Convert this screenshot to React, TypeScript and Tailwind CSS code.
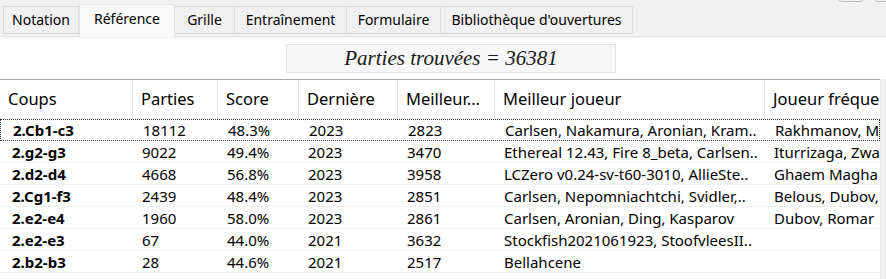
const tabs = [
  { label: "Notation", w: 76 },
  { label: "Référence", w: 96, active: true },
  { label: "Grille", w: 61 },
  { label: "Entraînement", w: 113 },
  { label: "Formulaire", w: 95 },
  { label: "Bibliothèque d'ouvertures", w: 193 },
];

const cols = [
  { label: "Coups", w: 133 },
  { label: "Parties", w: 85 },
  { label: "Score", w: 81 },
  { label: "Dernière", w: 99 },
  { label: "Meilleur...", w: 97 },
  { label: "Meilleur joueur", w: 270 },
  { label: "Joueur fréque", w: 115 },
];

const rows = [
  ["2.Cb1-c3", "18112", "48.3%", "2023", "2823", "Carlsen, Nakamura, Aronian, Kram..", "Rakhmanov, M"],
  ["2.g2-g3", "9022", "49.4%", "2023", "3470", "Ethereal 12.43, Fire 8_beta, Carlsen..", "Iturrizaga, Zwa"],
  ["2.d2-d4", "4668", "56.8%", "2023", "3958", "LCZero v0.24-sv-t60-3010, AllieSte..", "Ghaem Magha"],
  ["2.Cg1-f3", "2439", "48.4%", "2023", "2851", "Carlsen, Nepomniachtchi, Svidler,..", "Belous, Dubov,"],
  ["2.e2-e4", "1960", "58.0%", "2023", "2861", "Carlsen, Aronian, Ding, Kasparov", "Dubov, Romar"],
  ["2.e2-e3", "67", "44.0%", "2021", "3632", "Stockfish2021061923, StoofvleesII..", ""],
  ["2.b2-b3", "28", "44.6%", "2021", "2517", "Bellahcene", ""],
];

export default function App() {
  return (
    <div className="w-[886px] h-[279px] bg-white overflow-hidden relative font-['Noto_Sans',sans-serif] text-black">
      {/* buttons peeking at top right */}
      <div className="absolute right-[22px] -top-[6px] w-[26px] h-[8px] rounded border border-[#bdbdbd] bg-[#f3f3f3]" />
      <div className="absolute -right-[14px] -top-[6px] w-[26px] h-[8px] rounded border border-[#bdbdbd] bg-[#f3f3f3]" />

      {/* tab strip */}
      <div className="h-[37px] bg-[#f0f0f0] border-b border-[#e3e3e3] flex items-end pl-[3px]">
        {tabs.map((t) =>
          t.active ? (
            <div
              key={t.label}
              style={{ width: t.w }}
              className="h-[33px] -mb-px bg-[#f9f9f9] border border-b-0 border-[#e3e3e3] flex items-start justify-center pt-[4px] text-[14px] leading-[20px] relative z-10"
            >
              {t.label}
            </div>
          ) : (
            <div
              key={t.label}
              style={{ width: t.w }}
              className="h-[28px] mb-[2px] bg-[#f0f0f0] border border-[#dadada] -ml-px first:ml-0 flex items-center justify-center text-[14px] leading-[20px]"
            >
              {t.label}
            </div>
          )
        )}
      </div>
      <div className="h-[2px] bg-[#f7f7f7]" />

      {/* games found */}
      <div className="mt-[5px] ml-[286px] w-[330px] h-[29px] bg-[#f7f7f7] border border-[#e3e3e3] flex items-center justify-center font-['Liberation_Serif',serif] italic text-[21px] leading-none text-[#1a1a1a]">
        Parties trouvées = 36381
      </div>

      {/* table */}
      <div className="mt-[6px] flex">
        <div className="w-[880px] border-t border-[#a8a8a8] overflow-hidden">
          <div className="flex h-[39px] border-b border-[#f0f0f0]">
            {cols.map((c, j) => (
              <div
                key={c.label}
                style={{ width: c.w, minWidth: c.w }}
                className={
                  "flex items-center pl-[8px] text-[16.5px] whitespace-nowrap overflow-hidden " +
                  (j < cols.length - 1 ? "border-r border-[#e5e5e5]" : "")
                }
              >
                {c.label}
              </div>
            ))}
          </div>
          {rows.map((r, i) => (
            <div
              key={i}
              className={
                "flex h-[22px] items-center text-[15px] leading-[20px] whitespace-nowrap " +
                (i === 0 ? "border border-dotted border-[#333]" : "border-b border-[#f0f0f0]")
              }
            >
              {r.map((v, j) => (
                <div
                  key={j}
                  style={{ width: cols[j].w, minWidth: cols[j].w }}
                  className={j === 0 ? "pl-[12px] font-bold" : "pl-[9px]"}
                >
                  {v}
                </div>
              ))}
            </div>
          ))}
        </div>
        <div className="w-[6px] h-[200px] bg-[#f0f0f0] border-l border-[#e6e6e6]" />
      </div>
    </div>
  );
}
